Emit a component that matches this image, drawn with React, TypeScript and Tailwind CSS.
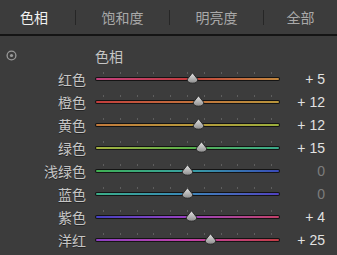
import React from "react";

type Row = { label: string; value: number; grad: string };

const rows: Row[] = [
  { label: "红色", value: 5, grad: "bg-linear-to-r from-[#c2407e] via-[#c23c3c] to-[#c2883e]" },
  { label: "橙色", value: 12, grad: "bg-linear-to-r from-[#c23c3c] via-[#c2703c] to-[#b8963c]" },
  { label: "黄色", value: 12, grad: "bg-linear-to-r from-[#c27a3c] via-[#b8983c] to-[#9aae3c]" },
  { label: "绿色", value: 15, grad: "bg-linear-to-r from-[#a4b040] via-[#58b04a] to-[#3aa88a]" },
  { label: "浅绿色", value: 0, grad: "bg-linear-to-r from-[#40b050] via-[#38a0a0] to-[#3a48b8]" },
  { label: "蓝色", value: 0, grad: "bg-linear-to-r from-[#3cae88] via-[#3a86b8] to-[#5040c0]" },
  { label: "紫色", value: 4, grad: "bg-linear-to-r from-[#4440c2] via-[#9a40c0] to-[#c24068]" },
  { label: "洋红", value: 25, grad: "bg-linear-to-r from-[#8c40c2] via-[#c040a8] to-[#c23c44]" },
];

const tabs = ["色相", "饱和度", "明亮度", "全部"];

const Thumb = () => (
  <svg width="13" height="12" viewBox="0 0 13 12">
    <defs>
      <linearGradient id="tg" x1="0" y1="0" x2="0" y2="1">
        <stop offset="0" stopColor="#e4e4e4" />
        <stop offset="1" stopColor="#8e8e8e" />
      </linearGradient>
    </defs>
    <path
      d="M6.5 0.8 L11.6 7.2 Q12 11.2 6.5 11.2 Q1 11.2 1.4 7.2 Z"
      fill="url(#tg)"
      stroke="#222"
      strokeWidth="0.9"
    />
  </svg>
);

const Slider = ({ value, grad }: { value: number; grad: string }) => {
  const x = 92.5 + (value / 100) * 91.5;
  return (
    <div className="relative w-[185px] h-[23px]">
      <div className="absolute top-[5px] left-[8px] right-[8px] flex justify-between">
        {Array.from({ length: 11 }).map((_, i) => (
          <span key={i} className="w-px h-[2px] bg-[#5e5e5e]" />
        ))}
      </div>
      <div className="absolute top-[10px] left-0 right-0 h-[4px] rounded-full bg-[#141414] p-px">
        <div className={`h-[2px] rounded-full ${grad}`} />
      </div>
      <div className="absolute top-[5px]" style={{ left: x - 6.5 }}>
        <Thumb />
      </div>
    </div>
  );
};

export default function App() {
  return (
    <div className="w-[337px] h-[255px] bg-[#3c3c3c] overflow-hidden font-['Noto_Sans_CJK_SC',sans-serif]">
      <header className="h-[36px] border-b-2 border-[#141414] grid grid-cols-[75px_1px_93px_1px_93px_1px_1fr] items-center">
        {tabs.map((t, i) => (
          <React.Fragment key={t}>
            {i > 0 && <span className="w-px h-[15px] bg-[#262626]" />}
            <span
              className={`text-center text-[14px] leading-none ${i === 0 ? "pr-[7px] text-[#f2f2f2]" : "text-[#a9a9a9]"}`}
            >
              {t}
            </span>
          </React.Fragment>
        ))}
      </header>
      <div className="pt-[8px]">
        <div className="h-[23px] flex items-center">
          <div className="w-[95px] pl-[6px] flex items-center">
            <svg width="11" height="11" viewBox="0 0 11 11">
              <circle cx="5.5" cy="5.5" r="4.4" fill="none" stroke="#9a9a9a" strokeWidth="1.3" />
              <circle cx="5.5" cy="5.5" r="1.6" fill="#9a9a9a" />
            </svg>
          </div>
          <span className="text-[14px] leading-none text-[#c6c6c6]">色相</span>
        </div>
        {rows.map((r) => (
          <div key={r.label} className="h-[23px] flex items-center">
            <span className="w-[86px] text-right text-[14px] leading-none text-[#c6c6c6] [text-shadow:0_1px_0_#262626]">
              {r.label}
            </span>
            <span className="w-[9px]" />
            <Slider value={r.value} grad={r.grad} />
            <span
              className={`w-[45px] text-right text-[14px] leading-none font-['Liberation_Sans',sans-serif] ${r.value === 0 ? "text-[#7c7c7c]" : "text-[#e2e2e2]"}`}
            >
              {r.value === 0 ? "0" : `+ ${r.value}`}
            </span>
          </div>
        ))}
      </div>
    </div>
  );
}
